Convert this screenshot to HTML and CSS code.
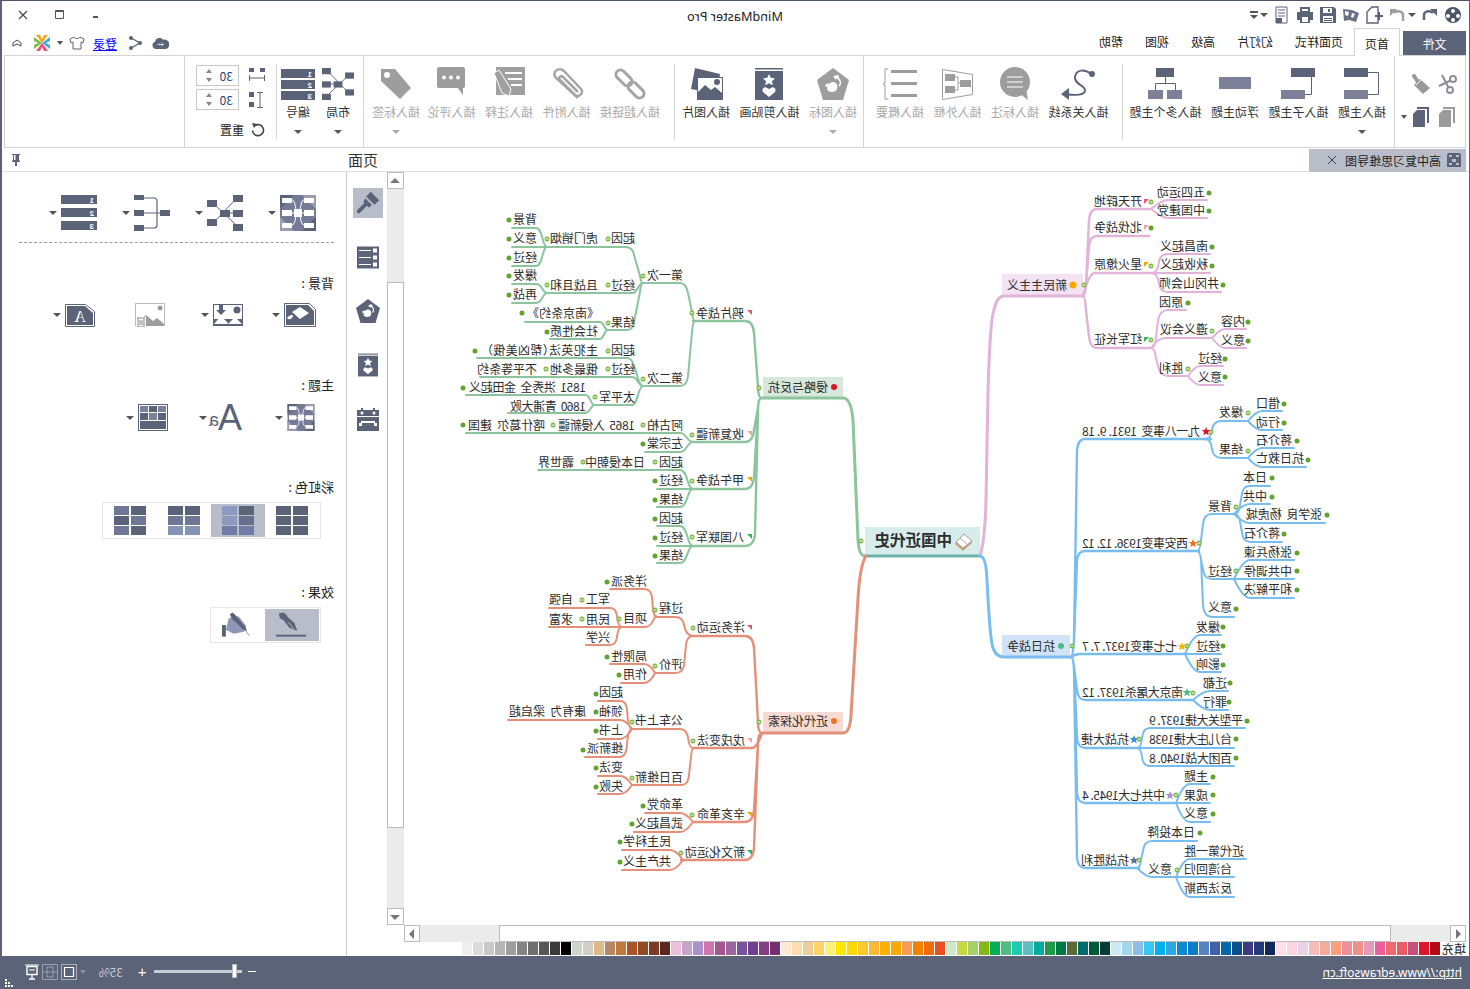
FILE: index.html
```html
<!DOCTYPE html>
<html lang="zh-CN">
<head>
<meta charset="utf-8">
<title>MindMaster Pro</title>
<link rel="stylesheet" href="styles.css">
</head>
<body>
<svg class="defs" width="0" height="0">
  <defs>
    <path id="star" d="M0-4l1.200 3.100h3.200l-2.500 2 .9 3.200-2.800-1.800-2.800 1.800.9-3.200-2.500-2h3.200z"/>
    <symbol id="pent" viewBox="0 0 32 32"><path d="M16 0 32 12 26 32H6L0 12Z"/><path fill="#fff" d="M10 21c0-4 3-7 6-7 4 0 5 4 4 7-1 4-9 4-10 0zM8 17l3-2 1 2-3 2z"/><path fill="none" stroke="#fff" stroke-width="1.5" d="M21 10c3 3 3 6 1 8M17 8l2 3"/><circle cx="20" cy="9" r="2" fill="#fff"/></symbol>
    <symbol id="clip" viewBox="0 0 28 32"><rect width="28" height="1.5"/><rect y="3" width="28" height="29"/><path fill="#fff" d="M14 6l1.8 3.8 4.2.5-3 2.9.8 4.1-3.800-2-3.800 2 .8-4.100-3-2.900 4.200-.5z"/><path fill="#fff" d="M14 29l-6-5c-2-3 2-6 4-4l2 1 2-1c2-2 6 1 4 4z"/></symbol>
    <symbol id="map" viewBox="0 0 36 36"><rect width="36" height="36" fill="#757b97"/><path fill="#5b6378" d="M0 0h14L0 14zM36 36H22l14-14z"/><path fill="#989db3" d="M36 0v14L22 0zM0 36V22l14 14z"/><g fill="#fff"><rect x="2" y="3" width="10" height="5"/><rect x="2" y="15" width="10" height="6"/><rect x="2" y="28" width="10" height="5"/><rect x="24" y="3" width="10" height="5"/><rect x="24" y="15" width="10" height="6"/><rect x="24" y="28" width="10" height="5"/><rect x="14" y="14" width="8" height="8"/></g><path fill="none" stroke="#fff" d="M12 5c4 0 3 13 6 13M24 5c-4 0-3 13-6 13M12 30c4 0 3-12 6-12M24 30c-4 0-3-12-6-12M12 18h12"/></symbol>
    <symbol id="layout" viewBox="0 0 36 36"><g fill="#5b6378"><rect x="13" y="15" width="10" height="7"/><rect y="5" width="10" height="7"/><rect y="24" width="10" height="7"/><rect x="26" width="10" height="7"/><rect x="26" y="15" width="10" height="7"/><rect x="26" y="29" width="10" height="7"/></g><path fill="none" stroke="#5b6378" d="M8 10l20 19M8 26L28 5M18 18h10"/></symbol>
    <symbol id="tree" viewBox="0 0 36 36"><g fill="#5b6378"><rect width="10" height="5"/><rect y="15" width="10" height="6"/><rect y="30" width="10" height="6"/><rect x="26" y="15" width="10" height="6"/></g><path fill="none" stroke="#5b6378" stroke-width="1.2" d="M10 3h10q3 0 3 3v24q0 3-3 3H10M10 18h16"/></symbol>
  </defs>
</svg>
<div class="app">
  <header class="titlebar">
    <div class="quick">
      <svg class="q flip" viewBox="0 0 18 18"><circle cx="9" cy="9" r="8" fill="#4d5468"/><path fill="#fff" d="M9 3a2 2 0 1 1-.01 0zM4 8a2 2 0 1 1-.01 0zM14 8a2 2 0 1 1-.01 0zM9 12a2 2 0 1 1-.01 0z"/></svg>
      <svg class="q flip" viewBox="0 0 18 18"><path fill="none" stroke="#5b6378" stroke-width="2.4" d="M3 14V9c0-4 6-5 9-2"/><path fill="#5b6378" d="M9 3h7v7z"/></svg>
      <i class="caret"></i>
      <svg class="q flip" viewBox="0 0 18 18"><path fill="none" stroke="#9b9b9b" stroke-width="2.4" d="M15 15V9c0-4-6-5-9-2"/><path fill="#9b9b9b" d="M9 3H2v7z"/></svg>
      <svg class="q flip" viewBox="0 0 18 18"><path fill="#fff" stroke="#5b6378" stroke-width="1.4" d="M2 17V6l5-5h6v16z"/><path fill="#5b6378" d="M10 9h3V6h2v3h3v2h-3v3h-2v-3h-3z"/></svg>
      <svg class="q flip" viewBox="0 0 18 18"><path fill="#6a7085" d="M1 3l9 1 7 3-3 9-7-2-5 1z"/><path fill="#fff" d="M3 5l4 1-1 4-3-1zM10 7l3 1-2 4-2-1z"/></svg>
      <svg class="q flip" viewBox="0 0 18 18"><path fill="#5b6378" d="M1 1h14l2 2v14H1z"/><path fill="#fff" d="M4 2h9v5H4zM4 10h10v6H4z"/><path fill="#5b6378" d="M9 3h2v3H9zM5 12h8v1H5zM5 14h8v1H5z"/></svg>
      <svg class="q flip" viewBox="0 0 18 18"><path fill="#5b6378" d="M4 1h10v5H4zM1 6h16v8h-3v3H4v-3H1z"/><path fill="#fff" d="M6 11h6v5H6zM6 3h6v2H6z"/></svg>
      <svg class="q flip" viewBox="0 0 18 18"><path fill="#fff" stroke="#5b6378" d="M3 1h11v16H3z"/><path stroke="#5b6378" d="M5 4h7M5 7h7M5 10h7"/><path fill="#5b6378" d="M3 12h6v5H3z"/></svg>
      <i class="caret"></i>
      <span class="menu-caret"><b></b><i class="caret"></i></span>
    </div>
    <div class="title">MindMaster Pro</div>
    <div class="winctl">
      <svg class="w" viewBox="0 0 12 12"><path stroke="#555" stroke-width="2" d="M3 8h5"/></svg>
      <svg class="w" viewBox="0 0 12 12"><path fill="none" stroke="#555" d="M1.500 1.500h8v8h-8z"/><path stroke="#555" d="M1.500 2.500h8"/></svg>
      <svg class="w" viewBox="0 0 12 12"><path stroke="#444" stroke-width="1.100" d="M2 2l8 8M10 2l-8 8"/></svg>
    </div>
  </header>

  <nav class="tabs">
    <div class="tab file">文件</div>
    <div class="tab active">首页</div>
    <div class="tab">页面样式</div>
    <div class="tab">幻灯片</div>
    <div class="tab">高级</div>
    <div class="tab">视图</div>
    <div class="tab">帮助</div>
    <div class="account">
      <svg class="cloud flip" viewBox="0 0 18 12"><path fill="#5b6378" d="M4 12a4 4 0 0 1-1-7.800A5 5 0 0 1 12 2a4 4 0 0 1 3 10z"/><path stroke="#fff" d="M6 7h6M10 5l2 2-2 2"/></svg>
      <svg class="share flip" viewBox="0 0 14 14"><path fill="none" stroke="#5b6378" stroke-width="1.400" d="M3 2l9 5-9 5"/><circle cx="3" cy="2" r="2" fill="#5b6378"/><circle cx="12" cy="7" r="2" fill="#5b6378"/><circle cx="3" cy="12" r="2" fill="#5b6378"/></svg>
      <a class="login">登录</a>
      <svg class="shirt flip" viewBox="0 0 16 14"><path fill="#fff" stroke="#5b6378" d="M5 1 1 3 2 7l2-1v7h8V6l2 1 1-4-4-2c-1 2-5 2-6 0z"/></svg>
      <i class="caret"></i>
      <svg class="logo" viewBox="0 0 16 16"><path fill="#f5a623" d="M2 0h4l2 4 2-4h4L8 8z"/><path fill="#e8507a" d="M2 16h4l2-4 2 4h4L8 8z"/><path fill="#47a8e5" d="M16 2v4l-4 2 4 2v4L8 8z" transform="matrix(-1 0 0 1 16 0)"/><path fill="#7fbf3f" d="M16 2v4l-4 2 4 2v4L8 8z"/></svg>
      <svg class="fold" viewBox="0 0 10 8"><path fill="#fff" stroke="#444" d="M1 7V4l4-3 4 3v3L5 5z"/></svg>
    </div>
  </nav>

  <section class="ribbon">
    <div class="rg g1">
      <svg class="sm flip" viewBox="0 0 20 20"><g fill="none" stroke="#8b8f99" stroke-width="2"><circle cx="16" cy="5" r="3"/><circle cx="13" cy="16" r="3"/><path d="M13.500 6.500 2 12M11.500 13.500 5 1"/></g></svg>
      <svg class="sm flip" viewBox="0 0 20 20"><path stroke="#999" stroke-width="4" stroke-linecap="round" d="M3 2l4 6"/><path fill="#999" d="M3 11l6-6 10 9-7 6z"/><path stroke="#fff" d="M5 11l5-5"/></svg>
      <svg class="sm flip" viewBox="0 0 20 20"><path fill="#9b9b9b" d="M6 0h12v16h-2V2H6zM2 7l4-4h8v17H2z"/></svg>
      <span class="paste"><svg class="sm flip" viewBox="0 0 20 20"><path fill="#5b6378" d="M6 0h12v16h-2V2H6zM2 7l4-4h8v17H2z"/></svg><i class="caret"></i></span>
    </div>
    <div class="rg g2">
      <div class="sec">
        <div class="rb"><svg class="ic flip" viewBox="0 0 36 34"><rect y="1" width="24" height="9" fill="#5b6378"/><rect y="23" width="24" height="9" fill="#7c8098"/><path fill="none" stroke="#5b6378" d="M24 5.500h10.500v22H24"/></svg><span>插入主题</span><i class="caret"></i></div>
        <div class="rb"><svg class="ic flip" viewBox="0 0 36 34"><rect x="11" y="1" width="24" height="9" fill="#5b6378"/><rect x="1" y="23" width="24" height="9" fill="#7c8098"/><path fill="none" stroke="#5b6378" d="M31.500 10v17.500H25"/></svg><span>插入子主题</span></div>
        <div class="rb"><svg class="ic flip" viewBox="0 0 36 34"><rect x="2" y="10" width="32" height="12" fill="#7c8098"/></svg><span>浮动主题</span></div>
        <div class="rb"><svg class="ic flip" viewBox="0 0 36 34"><rect x="9" y="1" width="18" height="9" fill="#5b6378"/><rect x="1" y="23" width="15" height="9" fill="#7c8098"/><rect x="20" y="23" width="15" height="9" fill="#7c8098"/><path fill="none" stroke="#5b6378" d="M18.500 10v6.500M8.500 23v-6.500h20V23"/></svg><span>插入多个主题</span></div>
      </div>
      <i class="sep s1"></i>
      <div class="sec">
        <div class="rb"><svg class="ic flip" viewBox="0 0 36 34"><circle cx="32" cy="7" r="3" fill="#5b6378"/><path fill="none" stroke="#5b6378" stroke-width="2" d="M31 7c-6-5-15-5-16 3-1 8 11 8 10 14-1 5-13 4-20 3"/><path fill="#5b6378" d="M9 21l-8 6 8 6z"/></svg><span>插入关系线</span></div>
        <div class="rb off"><svg class="ic flip" viewBox="0 0 36 34"><circle cx="18" cy="15" r="15" fill="#9d9d9d"/><path fill="#9d9d9d" d="M22 26l9 7-2-12z"/><path stroke="#fff" stroke-width="1.200" d="M10 10h16M10 15h16M10 20h16"/></svg><span>插入标注</span></div>
        <div class="rb off"><svg class="ic flip" viewBox="0 0 36 34"><path fill="none" stroke="#9d9d9d" d="M3.500 2.500l30 5v20l-30 5z"/><g fill="#9d9d9d"><rect x="6" y="7" width="10" height="7"/><rect x="6" y="19" width="10" height="7"/><rect x="21" y="13" width="11" height="7"/></g><path fill="none" stroke="#9d9d9d" d="M16 10h3v13h-3M19 16h2"/></svg><span>插入外框</span></div>
        <div class="rb off"><svg class="ic flip" viewBox="0 0 36 34"><path fill="none" stroke="#9d9d9d" d="M6 2H3v14l-2 1 2 1v14h3"/><g fill="#9d9d9d"><rect x="9" y="3" width="26" height="3"/><rect x="9" y="15" width="26" height="3"/><rect x="9" y="27" width="26" height="3"/></g></svg><span>插入概要</span></div>
      </div>
    </div>
    <div class="rg g3">
      <div class="sec">
        <div class="rb off"><svg class="ic flip"><use href="#pent" fill="#9d9d9d" x="2" y="1" width="32" height="32"/></svg><span>插入图标</span><i class="caret"></i></div>
        <div class="rb"><svg class="ic flip"><use href="#clip" fill="#5b6378" x="4" y="1" width="28" height="32"/></svg><span>插入剪贴画</span></div>
        <div class="rb"><svg class="ic flip" viewBox="0 0 36 34"><path fill="#5b6378" d="M7 1l25 6-3 20-26-5z"/><rect x="9.500" y="10.500" width="25" height="22" fill="#fff" stroke="#5b6378"/><path fill="#5b6378" d="M10 33v-8l7-7 6 5 4-3 7 6v7z"/><circle cx="29" cy="15" r="3" fill="#5b6378"/></svg><span>插入图片</span></div>
      </div>
      <i class="sep s2"></i>
      <div class="sec">
        <div class="rb off"><svg class="ic flip" viewBox="0 0 36 34"><g fill="none" stroke="#a5a5a5" stroke-width="3" transform="rotate(45 18 17)"><rect x="0" y="12.500" width="19" height="9" rx="4.500"/><rect x="17" y="12.500" width="19" height="9" rx="4.500"/></g></svg><span>插入超链接</span></div>
        <div class="rb off"><svg class="ic flip" viewBox="0 0 36 34"><path fill="none" stroke="#a5a5a5" stroke-width="2.500" d="M30 31 8 11C3 5 11-1 16 4l17 18c3 4-2 9-6 6L12 13c-2-3 1-5 3-3l15 15"/></svg><span>插入附件</span></div>
        <div class="rb off"><svg class="ic flip" viewBox="0 0 36 34"><rect x="5" width="29" height="28" fill="#a0a0a0"/><path stroke="#fff" stroke-width="2" d="M14 6h17M17 12h14M20 18h11"/><path fill="#a0a0a0" stroke="#fff" d="M3 6l5-3 12 19-2 7-7-3z"/></svg><span>插入注释</span></div>
        <div class="rb off"><svg class="ic flip" viewBox="0 0 36 34"><rect x="4" width="28" height="21" rx="2" fill="#9d9d9d"/><path fill="#9d9d9d" d="M24 20h6v8z"/><g fill="#fff"><circle cx="11" cy="10.500" r="2"/><circle cx="18" cy="10.500" r="2"/><circle cx="25" cy="10.500" r="2"/></g></svg><span>插入评论</span></div>
        <div class="rb off tag"><svg class="ic flip" viewBox="0 0 36 34"><path fill="#9d9d9d" d="M3 2h14l16 19-11 11L3 14z"/><circle cx="9" cy="8" r="3" fill="#fff"/></svg><span>插入标签</span><i class="caret"></i></div>
      </div>
    </div>
    <div class="rg g4">
      <div class="rb small"><svg class="ic32"><use href="#layout" x="0" y="0" width="32" height="32"/></svg><span>布局</span><i class="caret"></i></div>
      <div class="rb small"><svg class="ic34" viewBox="0 0 34 32"><g fill="#5b6378"><rect y="1" width="34" height="9"/><rect y="12" width="34" height="9"/><rect y="23" width="34" height="9"/></g><g class="barnum"><text x="3" y="8.500">1</text><text x="3" y="19.500">2</text><text x="3" y="30.500">3</text></g></svg><span>编号</span><i class="caret"></i></div>
      <i class="sep s3"></i>
      <div class="spacing">
        <div class="sp-row">
          <svg class="sm16" viewBox="0 0 16 16"><g fill="#5b6378"><rect width="5" height="4"/><rect x="11" width="5" height="4"/></g><path fill="none" stroke="#5b6378" d="M.500 7v6M15.500 7v6M.500 10h15"/></svg>
          <div class="spin"><span>30</span><em></em><em class="dn"></em></div>
        </div>
        <div class="sp-row">
          <svg class="sm16" viewBox="0 0 16 16"><g fill="#5b6378"><rect x="11" y="0" width="5" height="5"/><rect x="11" y="10" width="5" height="5"/></g><path fill="none" stroke="#5b6378" d="M2 .500h6M2 15.500h6M5 .500v15"/></svg>
          <div class="spin"><span>30</span><em></em><em class="dn"></em></div>
        </div>
        <div class="reset"><svg class="sm14 flip" viewBox="0 0 14 14"><path fill="none" stroke="#444" stroke-width="1.600" d="M4 2.500a5.500 5.500 0 1 1-2.500 5"/><path fill="#444" d="M1 0l5 1-3 4z"/></svg><span>重置</span></div>
      </div>
    </div>
    <div class="rg g5"></div>
  </section>

  <div class="docbar">
    <div class="doctab">
      <svg class="sm14 flip" viewBox="0 0 14 14"><path fill="#5b6378" d="M0 2l1-2h12l1 2v12H0z"/><path fill="#b9bdc9" d="M2 2h3v2H2zM9 2h3v2H9zM5 6h4v3H5zM2 10h3v2H2zM9 10h3v2H9z"/></svg>
      <span>高中复习思维导图</span>
      <svg class="x" viewBox="0 0 8 8"><path stroke="#444" d="M0 0l8 8M8 0 0 8"/></svg>
    </div>
    <div class="pagetitle">页面</div>
    <svg class="pin flip" viewBox="0 0 10 12"><path fill="#5b6378" d="M1 0h8v1H8v5l1 1v1H6v4H4V8H1V7l1-1V1H1z"/><path fill="#fff" d="M3 1h1.500v5H3z"/></svg>
  </div>

  <main class="main">
    <div class="canvas-col">
      <div class="canvas">
        <svg class="mm" viewBox="4 172 1062 753">
          <g transform="matrix(-1 0 0 1 1470 0)">
            <!-- topic boxes -->
            <rect class="b-center" x="865" y="527" width="115" height="29"/>
            <rect class="b-green" x="763" y="377" width="80" height="21"/>
            <rect class="b-salmon" x="763" y="712" width="80" height="21"/>
            <rect class="b-pink" x="1002" y="274" width="81" height="22"/>
            <rect class="b-blue" x="1002" y="635" width="68" height="22"/>
            <path class="l thick teal" d="M865 556H980"/>
            <!-- green -->
            <path class="l thick green" d="M763 398H843Q851 398 853 420L858 540Q859 556 865 556"/>
            <path class="l mid green" d="M693 321H745Q753 321 754 333L758 387Q758 398 762 398M693 442H745Q753 442 754 430L758 408Q758 398 762 398M693 489H745Q753 489 754 477L758 410Q758 398 762 398M693 546H745Q754 546 755 534L758 410Q758 398 762 398"/>
            <path class="l green" d="M512 228H536C543 228 542 247 547 247M512 247H547M512 266H536C543 266 542 247 547 247M547 247H625Q633 247 634 255L640 276Q641 283 643 283M512 284H536C543 284 542 293 547 293M512 303H536C543 303 542 293 547 293M547 293H632C638 293 638 283 643 283M608 330H627Q633 330 634 322L640 292Q641 283 643 283M525 322H600C604 322 604 330 608 330M550 339H600C604 339 604 330 608 330M643 283H680Q686 283 688 293L692 312Q693 321 695 321M643 386H680Q687 386 688 376L692 332Q693 321 695 321M477 358H627C637 358 636 386 643 386M480 377H632C638 377 638 386 643 386M595 405H632C638 405 638 386 643 386M466 395H585C591 395 590 405 595 405M508 413H585C591 413 590 405 595 405M466 433H680C687 433 687 442 693 442M645 452H680C687 452 687 442 693 442M538 470H680C688 470 687 489 693 489M657 489H693M657 507H680C688 507 687 489 693 489M657 526H680C688 526 687 546 693 546M657 546H693M657 563H680C688 563 687 546 693 546"/>
            <!-- salmon -->
            <path class="l thick salmon" d="M763 733H843Q850 733 851 715L858 598Q860 565 866 556"/>
            <path class="l mid salmon" d="M693 636H745Q753 636 754 648L758 722Q758 733 762 733M693 748H752Q757 748 762 733M693 822H745Q753 822 754 810L758 744Q758 733 762 733M681 860H745Q753 860 754 848L758 744Q758 733 762 733"/>
            <path class="l salmon" d="M655 617H675Q683 617 684 625Q686 636 693 636M655 673H675Q683 673 684 665L686 645Q687 636 693 636M610 589H644Q651 589 652 597L653 610Q654 617 658 617M619 627H645Q651 627 655 617M549 608H610Q616 608 617 616Q618 627 622 627M549 627H622M586 645H610Q616 645 617 637Q618 627 622 627M610 664H644Q650 664 655 673M621 683H644Q650 683 655 673M632 729H680Q686 729 688 737Q689 748 693 748M632 785H682Q688 785 689 775L691 757Q692 748 693 748M598 701H620Q626 701 627 709Q628 729 632 729M508 720H620Q626 720 632 729M598 739H620Q626 739 632 729M585 757H620Q626 757 627 745Q628 729 632 729M598 776H620Q626 776 632 785M598 794H620Q626 794 632 785M645 813H680Q686 813 693 822M634 832H680Q686 832 693 822M622 850H670Q676 850 683 860M622 870H670Q676 870 683 860"/>
            <!-- pink -->
            <path class="l thick pink" d="M980 556Q985 540 986 500L988 392Q990 320 994 310Q997 296 1004 296H1083"/>
            <path class="l mid pink" d="M1151 209H1097Q1090 209 1089 220L1086 285Q1085 296 1083 296M1149 236H1097Q1090 236 1089 246L1086 285Q1085 296 1083 296M1151 273H1095Q1089 273 1083 296M1151 348H1097Q1090 348 1089 336L1086 310Q1085 296 1083 296"/>
            <path class="l pink" d="M1207 200H1168Q1162 200 1151 209M1207 218H1168Q1162 218 1151 209M1210 254H1168Q1160 254 1159 262Q1158 273 1151 273M1210 273H1151M1221 292H1168Q1160 292 1159 284Q1158 273 1151 273M1186 310H1168Q1160 310 1158 320L1156 338Q1155 348 1151 348M1212 338H1165Q1158 338 1151 348M1188 376H1168Q1160 376 1158 366L1156 358Q1155 348 1151 348M1246 329H1225Q1220 329 1212 338M1246 348H1225Q1220 348 1212 338M1223 366H1200Q1195 366 1188 376M1223 385H1200Q1195 385 1188 376"/>
            <!-- blue -->
            <path class="l thick blue" d="M980 556Q986 556 987 580Q990 640 993 648Q996 657 1004 657H1072"/>
            <path class="l mid blue" d="M1211 439H1085Q1078 439 1077 450L1074 640Q1073 657 1071 657M1199 551H1085Q1078 551 1077 560L1074 640Q1073 657 1071 657M1187 654H1080Q1075 654 1071 657M1193 700H1085Q1078 700 1077 690L1074 668Q1073 657 1071 657M1139 748H1085Q1078 748 1077 738L1074 668Q1073 657 1071 657M1176 803H1085Q1078 803 1077 793L1074 668Q1073 657 1071 657M1139 868H1085Q1078 868 1077 858L1074 668Q1073 657 1071 657"/>
            <path class="l blue" d="M1248 421H1222Q1213 421 1212 430Q1211 439 1205 439M1248 458H1222Q1213 458 1212 449Q1211 439 1205 439M1282 411H1262Q1256 411 1248 421M1282 430H1262Q1256 430 1248 421M1294 448H1262Q1256 448 1248 458M1306 467H1262Q1256 467 1248 458M1234 514H1212Q1204 514 1203 524L1201 540Q1200 551 1197 551M1234 579H1212Q1204 579 1203 569L1201 560Q1200 551 1197 551M1234 617H1212Q1204 617 1203 605L1201 560Q1200 551 1197 551M1270 486H1250Q1243 486 1242 494L1240 505Q1239 514 1234 514M1270 504H1250Q1243 504 1234 514M1325 523H1250Q1243 523 1234 514M1282 542H1250Q1243 542 1242 532L1240 522Q1239 514 1234 514M1294 560H1250Q1243 560 1234 579M1294 579H1234M1294 598H1250Q1243 598 1234 579M1221 635H1200Q1193 635 1185 654M1221 654H1185M1221 672H1200Q1193 672 1185 654M1228 691H1210Q1203 691 1193 700M1228 710H1210Q1203 710 1193 700M1245 728H1150Q1143 728 1142 738Q1141 748 1137 748M1234 748H1137M1234 766H1150Q1143 766 1142 757Q1141 748 1137 748M1210 784H1190Q1183 784 1176 803M1210 803H1174M1210 822H1190Q1183 822 1176 803M1197 841H1152Q1144 841 1143 851L1141 860Q1140 868 1137 868M1176 877H1152Q1146 877 1137 868M1246 859H1190Q1183 859 1176 877M1234 877H1176M1234 897H1190Q1183 897 1176 877"/>
            <!-- expand / collapse dots -->
            <path class="dot" d="M509 220h0M509 239h0M509 258h0M509 276h0M509 295h0M522 313h0M547 332h0M475 351h0M463 388h0M463 425h0M643 444h0M655 481h0M655 500h0M655 519h0M655 538h0M655 556h0M607 582h0M607 657h0M619 675h0M596 694h0M596 712h0M596 731h0M583 750h0M596 768h0M596 787h0M643 806h0M632 824h0M620 842h0M620 862h0M1209 193h0M1209 211h0M1151 228h0M1212 247h0M1212 266h0M1223 285h0M1188 303h0M1248 322h0M1248 341h0M1225 359h0M1225 377h0M1284 404h0M1284 423h0M1297 441h0M1308 460h0M1272 478h0M1272 497h0M1327 515h0M1284 534h0M1297 553h0M1297 571h0M1297 590h0M1236 609h0M1223 627h0M1223 646h0M1223 665h0M1230 683h0M1229 702h0M1247 721h0M1236 739h0M1236 758h0M1213 777h0M1213 795h0M1213 814h0M1200 833h0"/>
            <path class="dot open" d="M547 239h0M608 239h0M547 285h0M608 285h0M608 323h0M643 276h0M692 313h0M643 379h0M608 351h0M608 369h0M546 369h0M595 397h0M692 435h0M643 425h0M553 425h0M692 481h0M655 462h0M583 462h0M692 537h0M759 388h0M693 628h0M655 610h0M655 666h0M619 619h0M582 600h0M582 619h0M693 741h0M632 722h0M632 778h0M692 815h0M681 853h0M759 722h0M861 541h0M1151 202h0M1151 266h0M1151 340h0M1212 331h0M1188 369h0M1084 285h0M1211 432h0M1248 413h0M1248 451h0M1199 543h0M1236 507h0M1236 571h0M1187 646h0M1193 693h0M1139 739h0M1176 795h0M1139 860h0M1177 870h0M1072 646h0"/>
            <path class="dot-in" d="M545.500 239h3M606.500 239h3M545.500 285h3M606.500 285h3M606.500 323h3M641.500 276h3M690.500 313h3M641.500 379h3M606.500 351h3M606.500 369h3M544.500 369h3M593.500 397h3M690.500 435h3M641.500 425h3M551.500 425h3M690.500 481h3M653.500 462h3M581.500 462h3M690.500 537h3M757.500 388h3M691.500 628h3M653.500 610h3M653.500 666h3M617.500 619h3M580.500 600h3M580.500 619h3M691.500 741h3M630.500 722h3M630.500 778h3M690.500 815h3M679.500 853h3M757.500 722h3M859.500 541h3M1149.500 202h3M1149.500 266h3M1149.500 340h3M1210.500 331h3M1186.500 369h3M1082.500 285h3M1209.500 432h3M1246.500 413h3M1246.500 451h3M1197.500 543h3M1234.500 507h3M1234.500 571h3M1185.500 646h3M1191.500 693h3M1137.500 739h3M1174.500 795h3M1137.500 860h3M1175.500 870h3M1070.500 646h3"/>
            <!-- topic markers -->
            <circle cx="834" cy="387" r="3" fill="#d7182a"/>
            <circle cx="834" cy="721" r="3" fill="#f2711c"/>
            <circle cx="1073" cy="285" r="3.500" fill="#f7a800"/>
            <circle cx="1061" cy="646" r="3" fill="#4fb98a"/>
            <!-- flags -->
            <path fill="#e8557a" d="M747 310h5v5zM747 625h5v5z"/>
            <path fill="#f5a5a0" d="M747 431h5v5zM747 738h5v5zM1149 225h-5v5z"/>
            <path fill="#f9a800" d="M747 477h5v5zM747 812h5v5zM1149 262h-5v5z"/>
            <path fill="#2db55d" d="M747 534h5v5zM747 850h5v5zM1149 337h-5v5z"/>
            <path fill="#e8557a" d="M1149 199h-5v5z"/>
            <!-- stars -->
            <use href="#star" class="s-red" x="1206" y="431"/>
            <use href="#star" class="s-orange" x="1193" y="543"/>
            <use href="#star" class="s-yellow" x="1182" y="646"/>
            <use href="#star" class="s-green" x="1187" y="692"/>
            <use href="#star" class="s-blue" x="1134" y="739"/>
            <use href="#star" class="s-purple" x="1170" y="795"/>
            <use href="#star" class="s-slate" x="1134" y="860"/>
            <!-- book -->
            <path fill="#c9a77a" d="M955 544l8 7 9-8-1-2-8 7-7-6z"/>
            <path fill="#fff" stroke="#8a8a8a" stroke-width=".8" d="M956 542l8-8 8 7-9 7z"/>
            <path stroke="#b0b0b0" d="M960 538l7 6"/>
          </g>
          <g class="nodes" transform="translate(0 1)">
            <text class="root" x="518" y="545">中国近代史</text>
            <!-- 侵略与反抗 -->
            <text x="642" y="391">侵略与反抗</text>
            <text x="726" y="317">鸦片战争</text><text x="787" y="279">第一次</text><text x="835" y="242">起因</text><text x="872" y="242">虎门销烟</text><text x="933" y="223">背景</text><text x="933" y="242">意义</text><text x="933" y="261">经过</text>
            <text x="835" y="289">经过</text><text x="872" y="289">且战且和</text><text x="933" y="279">爆发</text><text x="933" y="298">再战</text>
            <text x="835" y="326">结果</text><text class="pal" x="877" y="317">《南京条约》</text><text x="872" y="335">社会性质</text>
            <text x="787" y="382">第二次</text><text x="835" y="354">起因</text><text class="pal" x="872" y="354" textLength="111">主犯英法（帮凶美俄）</text><text x="835" y="373">经过</text><text x="872" y="373">俄最多地</text><text x="933" y="373">不平等条约</text>
            <text x="835" y="401">太平军</text><text x="884" y="391" textLength="117">1851  洪秀全  金田起义</text><text x="884" y="410" textLength="76">1860  青浦大败</text>
            <text x="726" y="438">收复新疆</text><text x="787" y="429">阿古柏</text><text x="835" y="429" textLength="77">1865  入侵新疆</text><text x="925" y="429" textLength="77">喀什葛尔  建国</text><text x="787" y="447">左宗棠</text>
            <text x="726" y="484">甲午战争</text><text x="787" y="466">起因</text><text x="825" y="466">日本侵朝中</text><text x="896" y="466">霸世界</text><text x="787" y="484">经过</text><text x="787" y="503">结果</text>
            <text x="726" y="541">八国联军</text><text x="787" y="522">起因</text><text x="787" y="541">经过</text><text x="787" y="559">结果</text>
            <!-- 近代化探索 -->
            <text x="642" y="725">近代化探索</text>
            <text x="725" y="631">洋务运动</text><text x="787" y="612">过程</text><text x="823" y="585">洋务派</text><text x="823" y="622">项目</text><text x="860" y="603">军工</text><text x="897" y="603">自强</text><text x="860" y="623">民用</text><text x="897" y="623">求富</text><text x="860" y="641">兴学</text>
            <text x="787" y="668">评价</text><text x="823" y="660">局限性</text><text x="823" y="678">作用</text>
            <text x="725" y="744">戊戌变法</text><text x="787" y="724">公车上书</text><text x="847" y="696">起因</text><text x="847" y="715">领袖</text><text x="884" y="715" textLength="77">康有为  梁启超</text><text x="847" y="734">上书</text><text x="847" y="752">维新派</text>
            <text x="787" y="781">百日维新</text><text x="847" y="771">变法</text><text x="847" y="790">失败</text>
            <text x="725" y="818">辛亥革命</text><text x="787" y="808">革命党</text><text x="787" y="827">武昌起义</text>
            <text x="725" y="856">新文化运动</text><text x="799" y="845">民主科学</text><text x="799" y="865">共产主义</text>
            <!-- 新民主主义 -->
            <text x="403" y="289">新民主主义</text>
            <text x="328" y="205">开天辟地</text><text x="265" y="196">五四运动</text><text x="265" y="214">中国建党</text>
            <text x="328" y="231">北伐战争</text>
            <text x="328" y="268">星火燎原</text><text x="262" y="250">南昌起义</text><text x="262" y="268">秋收起义</text><text x="251" y="287">井冈山会师</text>
            <text x="328" y="343">红军长征</text><text x="287" y="306">原因</text><text x="262" y="333">遵义会议</text><text x="225" y="325">内容</text><text x="225" y="344">意义</text><text x="287" y="372">胜利</text><text x="248" y="362">经过</text><text x="248" y="381">意义</text>
            <!-- 抗日战争 -->
            <text x="415" y="650">抗日战争</text>
            <text x="270" y="435" textLength="118">九一八事变  1931. 9. 18</text><text x="227" y="416">爆发</text><text x="190" y="407">借口</text><text x="190" y="426">行动</text><text x="227" y="453">结果</text><text x="178" y="444">蒋介石</text><text x="166" y="462">抗日救亡</text>
            <text x="282" y="547" textLength="106">西安事变1936. 12. 12</text><text x="238" y="510">背景</text><text x="203" y="481">日本</text><text x="203" y="500">中共</text><text x="148" y="518" textLength="76">张学良  杨虎城</text><text x="190" y="537">蒋介石</text>
            <text x="238" y="575">经过</text><text x="178" y="556">张杨兵谏</text><text x="178" y="575">中共调停</text><text x="178" y="593">和平解决</text><text x="238" y="611">意义</text>
            <text x="293" y="650" textLength="95">七七事变1937. 7. 7</text><text x="250" y="631">爆发</text><text x="250" y="650">经过</text><text x="250" y="668">影响</text>
            <text x="287" y="696" textLength="101">南京大屠杀1937. 12</text><text x="243" y="687">迁都</text><text x="243" y="706">罪行</text>
            <text x="341" y="743">抗战大捷</text><text x="227" y="724" textLength="94">平型关大捷1937. 9</text><text x="238" y="743" textLength="83">台儿庄大捷1938</text><text x="238" y="762" textLength="83">百团大战1940. 8</text>
            <text x="305" y="799" textLength="83">中共七大1945. 4</text><text x="262" y="780">主题</text><text x="262" y="799">成果</text><text x="262" y="817">意义</text>
            <text x="341" y="864">抗战胜利</text><text x="275" y="836">日本投降</text><text x="298" y="873">意义</text><text x="226" y="855">近代第一胜</text><text x="238" y="873">台湾回归</text><text x="238" y="892">反法西斯</text>
          </g>
        </svg>
      </div>
      <div class="hscroll"><b class="arr l"></b><i class="track t-r"></i><i class="thumb"></i><i class="track t-l"></i><b class="arr r"></b></div>
      <div class="palette">
        <span class="fill">填充</span>
        <div class="swatches">
          <i style="background:#b30a1a"></i><i style="background:#e0142a"></i><i style="background:#c55078"></i><i style="background:#ea5a68"></i><i style="background:#ee6a70"></i><i style="background:#e95f9c"></i><i style="background:#e29ab6"></i><i style="background:#ee8f8a"></i><i style="background:#f08f97"></i><i style="background:#fd9e7d"></i><i style="background:#f2ad9a"></i><i style="background:#f8bdb9"></i><i style="background:#e7d3e7"></i><i style="background:#fcd3e3"></i><i style="background:#fde0e5"></i>
          <i style="background:#0f2a5a"></i><i style="background:#243a78"></i><i style="background:#3c3a80"></i><i style="background:#0e4d90"></i><i style="background:#0067a8"></i><i style="background:#4360ac"></i><i style="background:#5484c4"></i><i style="background:#0a7ccc"></i><i style="background:#0c8ad0"></i><i style="background:#2ea8e0"></i><i style="background:#00b0ef"></i><i style="background:#38c6f4"></i><i style="background:#8bbfe6"></i><i style="background:#a0d6ee"></i><i style="background:#cde9f3"></i>
          <i style="background:#003d35"></i><i style="background:#005a3a"></i><i style="background:#006a6c"></i><i style="background:#5a6b35"></i><i style="background:#007a45"></i><i style="background:#1f9a48"></i><i style="background:#00ad9c"></i><i style="background:#5bbfbf"></i><i style="background:#1acdb2"></i><i style="background:#4fbc85"></i><i style="background:#00b050"></i><i style="background:#82b912"></i><i style="background:#a8d16a"></i><i style="background:#c4d942"></i><i style="background:#cfe8cb"></i>
          <i style="background:#e75020"></i><i style="background:#ef6c0a"></i><i style="background:#f38200"></i><i style="background:#f49c56"></i><i style="background:#f7ab00"></i><i style="background:#ffb000"></i><i style="background:#fdb933"></i><i style="background:#fbc92e"></i><i style="background:#ffd800"></i><i style="background:#ffe800"></i><i style="background:#fdf07e"></i><i style="background:#fdd368"></i><i style="background:#ecce9c"></i><i style="background:#fddcb0"></i><i style="background:#fdead5"></i>
          <i style="background:#77306f"></i><i style="background:#833e84"></i><i style="background:#70408f"></i><i style="background:#7a539f"></i><i style="background:#9b679f"></i><i style="background:#a6568f"></i><i style="background:#ce74ae"></i><i style="background:#ab90cd"></i><i style="background:#c9a3c9"></i><i style="background:#ecc0da"></i>
          <i style="background:#5a281c"></i><i style="background:#7a3c24"></i><i style="background:#954a26"></i><i style="background:#aa5525"></i><i style="background:#c07a3c"></i><i style="background:#b58868"></i><i style="background:#dfb989"></i><i style="background:#d2cdc5"></i><i style="background:#cad5cc"></i>
          <i style="background:#000"></i><i style="background:#3a3a3a"></i><i style="background:#575757"></i><i style="background:#6f6f6f"></i><i style="background:#848484"></i><i style="background:#9e9e9e"></i><i style="background:#b4b4b4"></i><i style="background:#c8c8c8"></i><i style="background:#dcdcdc"></i><i style="background:#eee"></i>
        </div>
      </div>
    </div>
    <div class="vscroll"><b class="arr u"></b><i class="vtrack vt-t"></i><i class="vthumb"></i><i class="vtrack vt-b"></i><b class="arr d"></b></div>
    <div class="vtools">
      <div class="vt sel"><svg class="vi flip" viewBox="0 0 30 30"><path fill="#5b6378" d="M18 3l9 9-5 5-9-9z"/><path fill="#5b6378" d="M12 10l7 7-3 3-6-6z"/><path stroke="#5b6378" stroke-width="4" stroke-linecap="round" d="M12 17l-7 7"/></svg></div>
      <div class="vt"><svg class="vi2 flip" viewBox="0 0 22 22"><rect width="22" height="22" fill="#5b6378"/><path stroke="#fff" d="M2 4h12M2 11h12M2 18h12"/><path fill="#fff" d="M16 2h4v4h-4zM16 9h4v4h-4zM16 16h4v4h-4z"/></svg></div>
      <div class="vt"><svg class="vi3 flip"><use href="#pent" fill="#5b6378" width="24" height="24"/></svg></div>
      <div class="vt"><svg class="vi4 flip"><use href="#clip" fill="#5b6378" width="20" height="24"/></svg></div>
      <div class="vt"><svg class="vi2 flip" viewBox="0 0 22 23"><rect y="2" width="22" height="21" fill="#5b6378"/><path fill="#fff" d="M0 8h22v1H0zM4 13h14v2H4zM2 15h3v3H2zM17 15h3v3h-3z"/><circle cx="5" cy="5" r="1.500" fill="#fff"/><circle cx="17" cy="5" r="1.500" fill="#fff"/><path fill="#5b6378" d="M4 0h2v3H4zM16 0h2v3h-2z"/></svg></div>
    </div>
    <aside class="panel">
      <div class="irow r1">
        <div class="ii"><svg class="i36 flip"><use href="#map" width="36" height="36"/></svg><i class="caret"></i></div>
        <div class="ii"><svg class="i36 flip"><use href="#layout" width="36" height="36"/></svg><i class="caret"></i></div>
        <div class="ii"><svg class="i36 flip"><use href="#tree" width="36" height="36"/></svg><i class="caret"></i></div>
        <div class="ii"><svg class="i36" viewBox="0 0 36 36"><g fill="#5b6378"><rect width="36" height="9"/><rect y="13" width="36" height="9"/><rect y="26" width="36" height="9"/></g><g class="barnum"><text x="3" y="7.500">1</text><text x="3" y="20.500">2</text><text x="3" y="33.500">3</text></g></svg><i class="caret"></i></div>
      </div>
      <div class="dashed"></div>
      <h3 class="lbl l1">背景 :</h3>
      <div class="irow r2">
        <div class="ii"><svg class="i32 flip" viewBox="0 0 32 24"><path fill="#fff" stroke="#5b6378" d="M.500.500h25l6 6v17H.500z"/><path fill="#5b6378" d="M2 2h22l6 6v14H2z"/><path fill="#fff" d="M8 9l8-5 9 6-9 6zM3 15c2-3 4-3 6-3 0 3-3 6-6 3z"/></svg><i class="caret"></i></div>
        <div class="ii"><svg class="i30 flip" viewBox="0 0 30 22"><rect width="30" height="22" fill="#5b6378"/><rect x="1" y="1" width="28" height="14" fill="#fff"/><path fill="#fff" d="M1 20l7-8 6 6 1 2H1zM15 20l7-7 7 7z"/><path fill="#5b6378" d="M6 1h4v5h3l-5 5-5-5h3z"/><circle cx="24" cy="6" r="3.500" fill="#5b6378"/></svg><i class="caret"></i></div>
        <div class="ii shift5"><svg class="i30 flip" viewBox="0 0 30 24"><rect x=".500" y=".500" width="29" height="22" fill="#fff" stroke="#bbb"/><path fill="#9d9d9d" d="M4 23V19l7-7 7 6 4-3 7 6v2z"/><circle cx="25" cy="5" r="2.500" fill="#9d9d9d"/><rect x="1" y="14" width="10" height="10" fill="#fff"/><path fill="none" stroke="#888" d="M2 15h8M3 15v9h6v-9M5 17v5M7 17v5"/></svg></div>
        <div class="ii shift2"><svg class="i30h" viewBox="0 0 30 23"><path fill="#fff" stroke="#5b6378" d="M.500.500h20l9 7v15H.500z" transform="matrix(-1 0 0 1 30 0)"/><path fill="#5b6378" d="M28 2H10L2 9v12h26z"/><text class="a-mark" x="15" y="18">A</text></svg><i class="caret"></i></div>
      </div>
      <h3 class="lbl l2">主题 :</h3>
      <div class="irow r3">
        <div class="ii"><svg class="i28 flip"><use href="#map" width="28" height="27"/></svg><i class="caret"></i></div>
        <div class="ii aa"><span class="aa-big">A</span><span class="aa-small">a</span><i class="caret"></i></div>
        <div class="ii shift1"><svg class="i30 flip" viewBox="0 0 30 27"><rect x=".500" y=".500" width="29" height="26" fill="#fff" stroke="#5b6378"/><g fill="#7c8098"><rect x="2" y="2" width="8" height="6"/><rect x="20" y="2" width="8" height="6"/><rect x="11" y="9" width="8" height="7"/></g><g fill="#5b6378"><rect x="11" y="2" width="8" height="6"/><rect x="2" y="9" width="8" height="7"/><rect x="20" y="9" width="8" height="7"/><rect x="2" y="17" width="26" height="8"/></g></svg><i class="caret"></i></div>
      </div>
      <h3 class="lbl l3">彩虹色 :</h3>
      <div class="cards">
        <div class="card"><div class="grid"><i class="c0"></i><i class="c0"></i><i class="c0"></i><i class="c0"></i><i class="c0"></i><i class="c0"></i></div></div>
        <div class="card on"><div class="grid"><i class="c0"></i><i class="c3"></i><i class="c4"></i><i class="c3"></i><i class="c2"></i><i class="c2"></i></div></div>
        <div class="card"><div class="grid"><i class="c0"></i><i class="c0"></i><i class="c1"></i><i class="c1"></i><i class="c5"></i><i class="c5"></i></div></div>
        <div class="card"><div class="grid"><i class="c0"></i><i class="c1"></i><i class="c1"></i><i class="c0"></i><i class="c0"></i><i class="c1"></i></div></div>
      </div>
      <h3 class="lbl l4">效果 :</h3>
      <div class="effects">
        <div class="fx on"><svg class="pen flip" viewBox="0 0 32 26"><path fill="#5b6378" d="M3 1l5-1 4 4-4 4-4-2zM7 7l4-3 8 7 3 8-8-3z"/><path stroke="#b9bdc9" d="M13 10l5 7"/><rect y="23" width="31" height="2" fill="#5b6378"/></svg></div>
        <div class="fx"><svg class="pen flip" viewBox="0 0 32 26"><path fill="#8f97b8" d="M7 6l10-2 8 10-2 6-11 2-8-4z"/><path fill="#5b6378" d="M8 2l3-2 3 3 10 12 2 4-4-1L10 6z"/><path stroke="#8f97b8" d="M24 18l4 6"/><rect x="0" y="13" width="4" height="12" fill="#5b6378" transform="matrix(-1 0 0 1 4 0)"/></svg></div>
      </div>
    </aside>
  </main>

  <footer class="status">
    <a class="url">http://www.edrawsoft.cn</a>
    <div class="zoomer">
      <i class="minus"></i>
      <div class="slider"><i class="knob"></i></div>
      <span class="plus">+</span>
      <span class="pct">35%</span>
      <i class="caret dim"></i>
      <svg class="st-i" viewBox="0 0 16 16"><path fill="none" stroke="#fff" stroke-dasharray="1 1" d="M.500.500h15v15H.500z"/><path fill="none" stroke="#fff" stroke-width="1.200" d="M3.500 3.500h9v9h-9z"/></svg>
      <svg class="st-i" viewBox="0 0 16 16"><path fill="none" stroke="#9aa0b0" d="M.500.500h15v15H.500zM5 3h6v10H5zM1 8h14"/></svg>
      <svg class="st-i" viewBox="0 0 16 16"><path fill="none" stroke="#fff" stroke-width="1.400" d="M2 2.500h10v8H2zM7 11v4M4 15h6"/><path stroke="#fff" d="M0 1h14M4 6h6"/></svg>
      <svg class="grip" viewBox="0 0 8 8"><path fill="#fff" d="M0 6h2v2H0zM3 6h2v2H3zM6 6h2v2H6zM3 3h2v2H3zM6 3h2v2H6zM6 0h2v2H6z"/></svg>
    </div>
  </footer>
</div>
</body>
</html>
```

FILE: styles.css
```css
* { box-sizing: border-box; }
html, body { margin: 0; padding: 0; background: #fff; overflow: hidden; }
.defs { position: absolute; }
i, em, b { display: block; font-style: normal; }

/* the whole application window is shown mirrored, as in the reference */
.app {
  width: 1470px; height: 989px;
  display: flex; flex-direction: column;
  transform: scaleX(-1);
  position: relative;
  font-family: "Noto Sans CJK SC", "Noto Sans", sans-serif;
  font-size: 12px; color: #333; background: #fff;
  overflow: hidden;
}
.app::after {
  content: ""; position: absolute; inset: 0; pointer-events: none;
  border-top: 1px solid #4d5468; border-left: 1px solid #5b6378; border-right: 2px solid #5b6378;
}
.flip { transform: scaleX(-1); }
.caret { width: 0; height: 0; border: 4px solid transparent; border-top: 4px solid #555; border-bottom: 0; flex: none; }
.off .caret { border-top-color: #aaa; }

/* title bar */
.titlebar { height: 28px; display: grid; grid-template-columns: 1fr auto 1fr; align-items: center; padding-top: 1px; flex: none; }
.quick { display: flex; align-items: center; gap: 5px; padding-left: 8px; }
.quick .caret { margin-right: -3px; }
.q { width: 18px; height: 18px; flex: none; }
.menu-caret { width: 8px; display: block; }
.menu-caret b { width: 8px; height: 2px; background: #555; margin-bottom: 2px; }
.title { font-family: "Noto Sans", sans-serif; font-size: 12.700px; color: #222; padding-top: 2px; }
.winctl { display: flex; justify-content: flex-end; gap: 24px; padding-right: 17px; }
.w { width: 12px; height: 12px; }

/* tabs */
.tabs { height: 27px; display: flex; align-items: flex-end; padding-left: 4px; position: relative; z-index: 2; flex: none; }
.tab { padding: 0 0 4px; margin-right: 22px; line-height: 18px; color: #222; }
.tab.file { width: 63px; height: 24px; margin-right: 3px; background: #5b6378; color: #fff; text-align: center; padding: 4px 0 0; }
.tab.active { width: 46px; height: 28px; margin: 0 11px -1px 0; text-align: center; background: #fff; border: 1px solid #d4d4d4; border-bottom: 0; padding: 6px 0 0; }
.account { position: absolute; left: 1300px; top: 5px; width: 165px; height: 20px; display: flex; align-items: center; }
.cloud { width: 17px; height: 11px; margin-left: 1px; }
.share { width: 14px; height: 14px; margin-left: 10px; }
.login { color: #00f; text-decoration: underline; margin-left: 11px; width: 24px; }
.shirt { width: 16px; height: 14px; margin-left: 8px; }
.account .caret { margin-left: 6px; border-width: 3px; border-top-width: 4px; }
.logo { width: 16px; height: 16px; margin-left: 7px; }
.fold { width: 10px; height: 8px; margin-left: 12px; }

/* ribbon */
.ribbon { height: 93px; margin: 0 4px; display: flex; border: 1px solid #d4d4d4; flex: none; position: relative; z-index: 1; }
.rg { height: 100%; display: flex; border-right: 1px solid #d4d4d4; flex: none; }
.g1 { width: 71px; display: grid; grid-template-columns: 26px 1fr; padding: 18px 0 0 8px; align-content: start; row-gap: 13px; }
.sm { width: 20px; height: 20px; }
.paste { display: flex; align-items: center; gap: 4px; }
.paste .caret { border-width: 3px; border-top-width: 4px; }
.g2 { width: 531px; padding-left: 8px; }
.g3 { width: 500px; padding-left: 6px; }
.g4 { width: 179px; padding-left: 8px; gap: 6px; }
.g5 { flex: 1; border-right: 0; }
.sec { display: flex; gap: 9.500px; }
.sep { width: 1px; height: 75px; background: #d4d4d4; margin-top: 8px; flex: none; }
.s1 { margin-left: 6px; margin-right: 14px; }
.s2 { margin-left: 7px; margin-right: 14px; }
.s3 { margin-left: -2px; margin-right: 5px; }
.rb { display: flex; flex-direction: column; align-items: center; padding-top: 11px; color: #333; position: relative; white-space: nowrap; }
.rb span { line-height: 18px; margin-top: 2px; }
.rb .caret { position: absolute; top: 74px; left: 50%; margin-left: -4px; }
.rb.off { color: #a8a8a8; }
.rb.tag { margin-left: -2px; }
.ic { width: 36px; height: 34px; }
.rb.small { width: 34px; }
.ic32 { width: 32px; height: 32px; margin: 1px 0 1px; }
.ic34 { width: 34px; height: 32px; margin: 1px 0 1px; }
.barnum text { font-size: 8px; font-weight: 700; fill: #fff; font-family: "Liberation Sans", sans-serif; }
.spacing { display: flex; flex-direction: column; gap: 3px; padding-top: 9px; width: 70px; }
.sp-row { display: flex; align-items: center; gap: 10px; height: 21px; }
.sm16 { width: 16px; height: 16px; }
.sm14 { width: 14px; height: 14px; }
.spin { width: 43px; height: 21px; border: 1px solid #c8c8c8; position: relative; padding-left: 5px; line-height: 19px; color: #1d3c78; }
.spin em { position: absolute; right: 9px; top: 3px; width: 0; height: 0; border: 3px solid transparent; border-bottom: 4px solid #888; border-top: 0; }
.spin em.dn { top: 12px; border-top: 4px solid #888; border-bottom: 0; }
.reset { display: flex; align-items: center; gap: 7px; margin-top: 8px; color: #222; font-size: 12px; }

/* document tab bar */
.docbar { height: 24px; display: flex; align-items: center; padding-left: 4px; border-bottom: 1px solid #ddd; flex: none; position: relative; }
.doctab { width: 157px; height: 23px; background: #b9bdc9; display: flex; align-items: center; padding-left: 5px; gap: 6px; color: #222; flex: none; margin-top: 1px; }
.x { width: 8px; height: 8px; margin-left: 3px; }
.pagetitle { margin-left: 931px; font-size: 15px; line-height: 20px; color: #333; }
.pin { width: 10px; height: 12px; margin-left: 327px; }

/* main */
.main { height: 784px; display: flex; padding-left: 4px; flex: none; }
.canvas-col { width: 1062px; display: flex; flex-direction: column; flex: none; }
.canvas { height: 753px; background: #fff; }
.mm { display: block; width: 1062px; height: 753px; }
.mm .l { fill: none; stroke-width: 2; stroke-linecap: round; }
.mm .mid { stroke-width: 2.400; }
.mm .thick { stroke-width: 3; }
.green { stroke: #8bc49d; }
.salmon { stroke: #e58f78; }
.pink { stroke: #e2b2d8; }
.blue { stroke: #78bdf0; }
.teal { stroke: #6ab4aa; }
.b-center { fill: #d9ecec; }
.b-green { fill: #d6e8dc; }
.b-salmon { fill: #f5dbd3; }
.b-pink { fill: #f3e2f1; }
.b-blue { fill: #d1e4f7; }
.dot { fill: none; stroke: #62a32e; stroke-width: 5; stroke-linecap: round; }
.dot.open { stroke: #7cb742; }
.dot-in { fill: none; stroke: #fff; stroke-width: 1; }
.s-red { fill: #d7182a; }
.s-orange { fill: #f2711c; }
.s-yellow { fill: #f9b500; }
.s-green { fill: #4fbc85; }
.s-blue { fill: #3a8fd8; }
.s-purple { fill: #ab90cd; }
.s-slate { fill: #5b6f92; }
.nodes text { font-size: 12px; fill: #2c2c2c; white-space: pre; }
.nodes .root { font-size: 15.500px; font-weight: 700; }
.nodes .pal { font-feature-settings: "halt"; }

.hscroll { height: 17px; display: flex; flex: none; }
.arr { width: 16px; height: 17px; border: 1px solid #bbb; background: #fff; flex: none; position: relative; }
.arr::after { content: ""; position: absolute; left: 50%; top: 50%; width: 0; height: 0; border: 5px solid transparent; }
.arr.r::after { border-left: 5px solid #777; border-right: 0; margin: -5px 0 0 -2px; }
.arr.l::after { border-right: 5px solid #777; border-left: 0; margin: -5px 0 0 -3px; }
.arr.u::after { border-bottom: 5px solid #777; border-top: 0; margin: -3px 0 0 -5px; }
.arr.d::after { border-top: 5px solid #777; border-bottom: 0; margin: -2px 0 0 -5px; }
.track { background: #ebebeb; flex: none; height: 17px; }
.t-r { width: 59px; }
.t-l { width: 79px; }
.thumb { width: 892px; height: 17px; background: #fff; border: 1px solid #bbb; flex: none; }
.palette { height: 14px; display: flex; align-items: flex-start; flex: none; }
.fill { width: 26px; font-size: 12px; line-height: 14px; color: #222; white-space: nowrap; }
.swatches { display: flex; gap: 1px; }
.swatches i { width: 10px; height: 13px; flex: none; }
.vscroll { width: 17px; height: 753px; display: flex; flex-direction: column; flex: none; }
.vscroll .arr { width: 17px; height: 17px; }
.vtrack { background: #ebebeb; width: 17px; flex: none; }
.vt-t { height: 93px; }
.vthumb { height: 546px; width: 17px; background: #fff; border: 1px solid #bbb; flex: none; }
.vt-b { height: 80px; }

.vtools { width: 40px; flex: none; display: flex; flex-direction: column; align-items: center; padding: 16px 2px 0 0; }
.vt { width: 30px; height: 30px; display: flex; align-items: center; justify-content: center; margin-bottom: 24px; }
.vt.sel { background: #b9bdc9; }
.vi { width: 28px; height: 28px; }
.vi2 { width: 22px; height: 23px; }
.vi3 { width: 24px; height: 24px; }
.vi4 { width: 20px; height: 24px; }

/* panel */
.panel { width: 345px; flex: none; border-left: 1px solid #c8c8c8; padding: 23px 0 0 12px; }
.irow { display: grid; grid-template-columns: repeat(4, 73px); padding-left: 18px; }
.r1 { height: 36px; }
.r2 { height: 24px; margin-top: 11px; }
.r3 { height: 27px; margin-top: 10px; padding-left: 19px; }
.ii { display: flex; align-items: center; gap: 4px; }
.shift5 { margin-left: 5px; }
.shift2 { margin-left: 2px; }
.shift1 { margin-left: 1px; }
.i36 { width: 36px; height: 36px; flex: none; }
.i32 { width: 32px; height: 24px; flex: none; }
.i30 { width: 30px; height: 24px; flex: none; }
.i30h { width: 30px; height: 23px; flex: none; }
.i28 { width: 28px; height: 27px; flex: none; }
.r3 .i30 { height: 27px; }
.a-mark { font-family: "Liberation Serif", serif; font-size: 16px; fill: #fff; text-anchor: middle; }
.aa { color: #5b6378; font-family: "Liberation Sans", sans-serif; gap: 0; }
.aa-big { font-size: 36px; line-height: 27px; letter-spacing: -1px; }
.aa-small { font-size: 18px; line-height: 22px; align-self: flex-end; }
.aa .caret { margin-left: 2px; }
.dashed { width: 315px; margin-top: 11px; border-top: 1px dashed #999; }
.lbl { margin: 0; font-size: 13px; line-height: 18px; font-weight: 400; color: #222; }
.l1 { margin-top: 31px; }
.l2 { margin-top: 49px; }
.l3 { margin-top: 47px; }
.l4 { margin-top: 44px; }
.cards { width: 219px; height: 37px; margin: 6px 0 0 13px; border: 1px solid #e6e6e6; display: flex; padding: 1px; }
.card { width: 54px; height: 33px; display: flex; align-items: center; justify-content: center; flex: none; }
.card.on { background: #b9bdc9; }
.grid { display: grid; grid-template-columns: 15px 15px; grid-template-rows: repeat(3, 9px); gap: 1px 2px; }
.c0 { background: #5b6378; }
.c1 { background: #6e7896; }
.c2 { background: #6f7ca5; }
.c3 { background: #8c9ac0; }
.c4 { background: #66708c; }
.c5 { background: #8593b5; }
.effects { width: 111px; height: 36px; margin: 6px 0 0 13px; border: 1px solid #e6e6e6; display: flex; padding: 1px; }
.fx { width: 54px; height: 32px; display: flex; align-items: center; justify-content: center; flex: none; }
.fx.on { background: #b9bdc9; }
.pen { width: 31px; height: 26px; }

/* status bar */
.status { height: 33px; background: #5b6378; display: flex; align-items: center; padding-left: 8px; flex: none; position: relative; color: #fff; }
.url { color: #fff; text-decoration: underline; font-family: "Noto Sans", sans-serif; font-size: 12px; width: 141px; white-space: nowrap; }
.zoomer { margin-left: 1059px; display: flex; align-items: center; height: 33px; padding-bottom: 2px; }
.minus { width: 8px; height: 1.500px; background: #fff; margin-left: 6px; }
.slider { width: 88px; height: 3px; background: #c8ccd4; margin-left: 6px; position: relative; }
.knob { position: absolute; left: 5px; top: -6px; width: 5px; height: 14px; background: #fff; border: 1px solid #bbb; }
.plus { width: 12px; margin-left: 6px; font-size: 15px; line-height: 20px; text-align: center; color: #fff; font-family: "Liberation Sans", sans-serif; }
.pct { color: #c8ccd8; margin-left: 13px; width: 27px; font-size: 12px; }
.caret.dim { border-top-color: #8a90a2; border-width: 3px; border-top-width: 4px; margin-left: 10px; }
.st-i { width: 16px; height: 16px; margin-left: 3px; flex: none; }
.grip { width: 8px; height: 8px; position: absolute; right: 5px; bottom: 2px; }
```
